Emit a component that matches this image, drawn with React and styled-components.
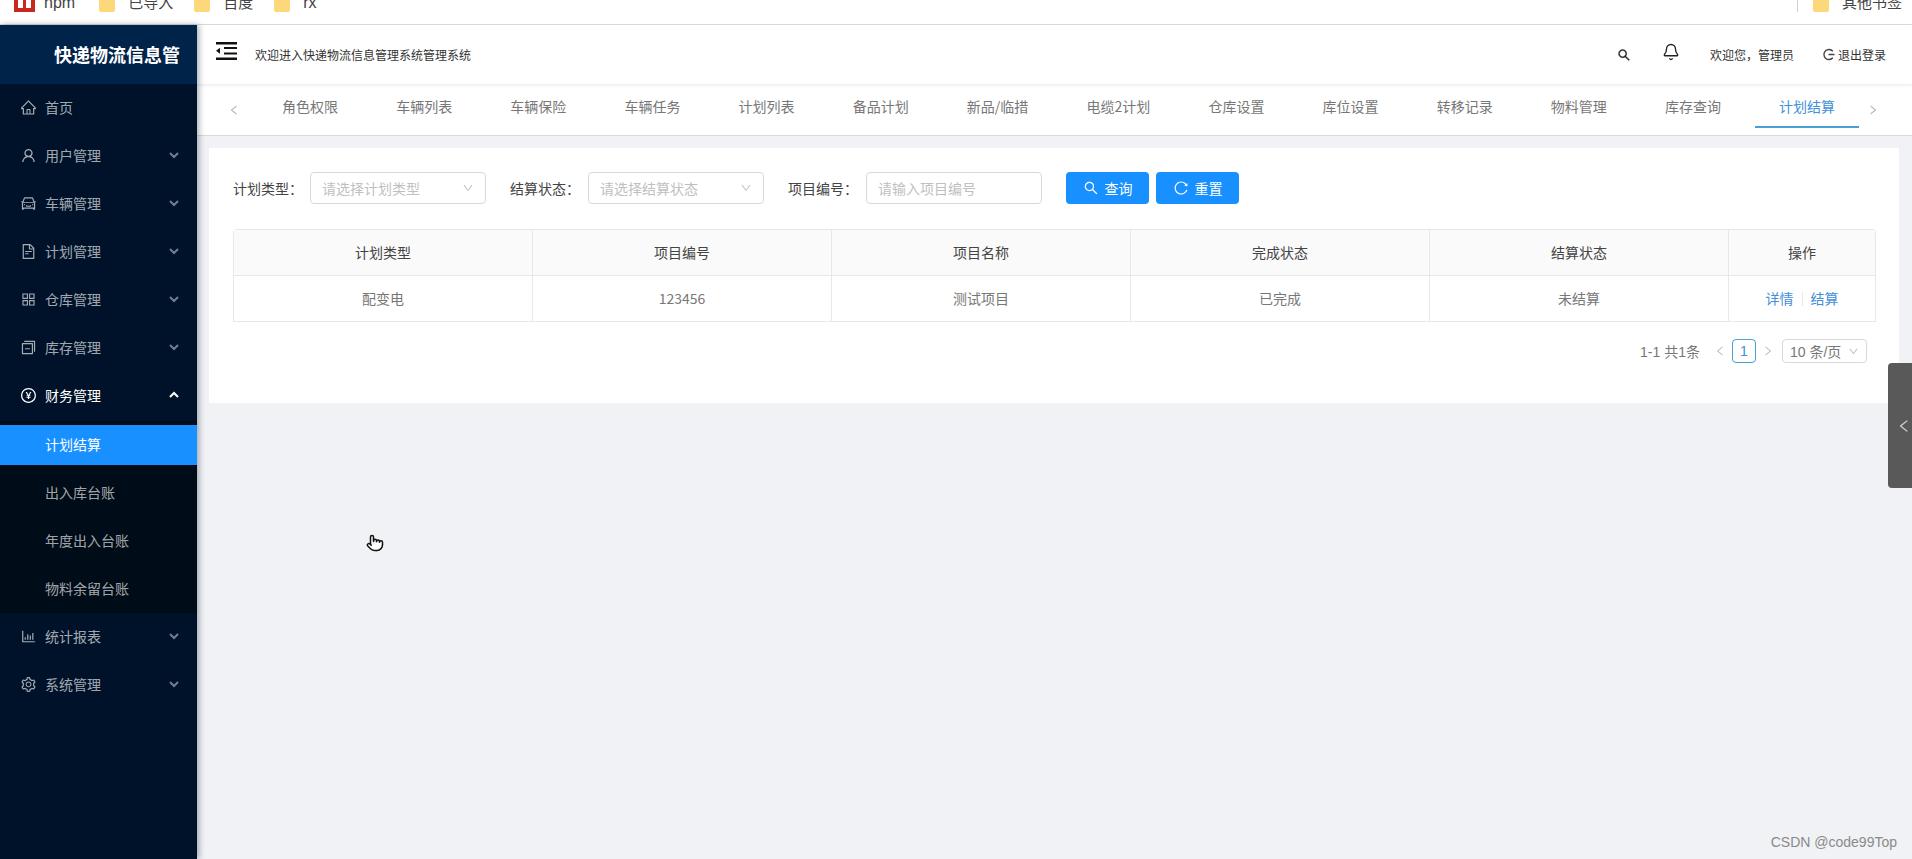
import React from 'react';
import styled, { createGlobalStyle } from 'styled-components';
import {
  AiOutlineHome, AiOutlineUser, AiOutlineCar, AiOutlineFileText, AiOutlineAppstore, AiOutlineSwitcher,
  AiOutlinePayCircle, AiOutlineBarChart, AiOutlineSetting, AiOutlineSearch, AiOutlineReload,
  AiOutlineDown, AiOutlineLeft, AiOutlineRight,
} from 'react-icons/ai';
import { Bell, Pointer } from 'lucide-react';

const GlobalStyle = createGlobalStyle`
  html, body { margin: 0; padding: 0; overflow: hidden; }
  body { font-family: "Noto Sans CJK SC", "Liberation Sans", sans-serif; font-size: 14px; }
  * { box-sizing: border-box; }
`;

const Page = styled.div`
  position: relative;
  width: 1912px;
  height: 859px;
  overflow: hidden;
  background: #f0f2f5;
  display: flex;
  flex-direction: column;
`;

/* browser bookmark bar, cut off by the top of the capture */
const Bookmarks = styled.div`
  height: 25px;
  flex: none;
  background: #fff;
  border-bottom: 1px solid #dcdcdc;
  display: flex;
  overflow: hidden;
  padding: 0 10px 0 14px;
`;
const Mark = styled.div`
  display: flex;
  flex: none;
  align-items: flex-start;
  margin-right: ${p => p.$gap}px;
  height: 24px;
  &.right { margin-left: auto; }
`;
const MarkText = styled.span`
  font-size: ${p => (p.$cjk ? 15 : 16)}px;
  line-height: 20px;
  margin-top: -7px;
  color: #444;
  white-space: nowrap;
  font-family: "Liberation Sans", "Noto Sans CJK SC", sans-serif;
`;
const Folder = styled.i`
  display: block;
  flex: none;
  width: 16px;
  height: 12px;
  background: #fdd87b;
  border-radius: 0 0 2px 2px;
  margin-right: 13px;
`;
const MarkDivider = styled.i`
  display: block;
  flex: none;
  width: 1px;
  height: 12px;
  background: #d0d0d0;
  margin-right: 15px;
`;

const Body = styled.div`
  flex: 1;
  display: flex;
  min-height: 0;
`;

const Sidebar = styled.aside`
  width: 197px;
  flex: none;
  background: #001229;
  box-shadow: 2px 0 6px rgba(0, 21, 41, 0.35);
  position: relative;
  z-index: 3;
`;
const Logo = styled.div`
  height: 59px;
  background: #00234a;
  color: #fff;
  font-size: 18px;
  font-weight: 700;
  line-height: 59px;
  padding-left: 54px;
  white-space: nowrap;
`;
const Nav = styled.nav`
  display: flex;
  flex-direction: column;
`;
const MenuItem = styled.div`
  height: 40px;
  margin: 4px 0;
  padding: 0 0 2px 20px;
  display: flex;
  align-items: center;
  color: ${p => (p.$open ? '#fff' : 'rgba(255, 255, 255, 0.65)')};
  line-height: 38px;
  position: relative;
  svg.menu-icon { font-size: 17px; margin-right: 8px; flex: none; }
`;
const Arrow = styled.svg`
  position: absolute;
  left: 169px;
  top: 15px;
  width: 10px;
  height: 8px;
  fill: none;
  stroke: currentColor;
  stroke-width: 2;
  opacity: ${p => (p.$up ? 1 : 0.7)};
`;
const SubMenu = styled.div`
  margin-top: 1px;
  background: #000c17;
  display: flex;
  flex-direction: column;
`;
const SubItem = styled.div`
  height: 40px;
  margin: 4px 0;
  padding-left: 45px;
  line-height: 38px;
  color: ${p => (p.$active ? '#fff' : 'rgba(255, 255, 255, 0.65)')};
  background: ${p => (p.$active ? '#1890ff' : 'transparent')};
`;

const Main = styled.div`
  flex: 1;
  min-width: 0;
  display: flex;
  flex-direction: column;
`;
const Header = styled.header`
  height: 59px;
  flex: none;
  background: #fff;
  box-shadow: 0 1px 3px rgba(0, 21, 41, 0.1);
  display: flex;
  align-items: center;
  padding: 0 26px 0 19px;
  font-size: 12px;
  color: #333;
  position: relative;
  z-index: 1;
`;
const FoldIcon = styled.svg`
  width: 21px;
  height: 18px;
  fill: #111;
  margin: -7px 18px 0 0;
`;
const Spacer = styled.div`
  flex: 1;
`;
const HeadSearch = styled(AiOutlineSearch)`
  font-size: 14px;
  color: #222;
  stroke: currentColor;
  stroke-width: 30;
  margin-right: 31px;
`;
const HeadBell = styled(Bell)`
  width: 18px;
  height: 18px;
  stroke-width: 1.8;
  color: #222;
  margin: -6px 30px 0 0;
`;
const LogoutIcon = styled.svg`
  width: 13px;
  height: 13px;
  fill: none;
  stroke: #444;
  stroke-width: 1.4;
`;
const Logout = styled.span`
  display: flex;
  align-items: center;
  gap: 3px;
  margin-left: 28px;
`;

const TabBar = styled.div`
  height: 52px;
  flex: none;
  background: #fff;
  border-bottom: 1px solid #d9d9d9;
  display: flex;
  position: relative;
  padding-left: 61px;
`;
const TabEnd = styled.span`
  position: absolute;
  top: 20px;
  left: ${p => p.$left}px;
  color: #aaa;
  font-size: 12px;
  line-height: 12px;
`;
const Tab = styled.div`
  height: 44px;
  padding: 0 24px;
  margin-right: 10.15px;
  line-height: 45px;
  white-space: nowrap;
  color: ${p => (p.$active ? '#3f90d8' : '#777')};
  border-bottom: 2px solid ${p => (p.$active ? '#4a9fd4' : 'transparent')};
`;

const Content = styled.main`
  padding: 12px 13px 0 12px;
`;
const Card = styled.section`
  background: #fff;
  padding: 24px 24px 40px;
`;
const Filters = styled.form`
  display: flex;
  align-items: center;
  height: 32px;
  margin-bottom: 25px;
`;
const Label = styled.label`
  color: #444;
  white-space: nowrap;
  width: ${p => p.$w}px;
`;
const Select = styled.div`
  width: 176px;
  height: 32px;
  margin-right: 24px;
  border: 1px solid #d9d9d9;
  border-radius: 4px;
  padding: 0 11px;
  display: flex;
  align-items: center;
  justify-content: space-between;
  color: #bfbfbf;
  svg { font-size: 12px; }
`;
const SearchBtn = styled.button`
  width: 83px;
  height: 32px;
  margin-right: 7px;
  border: 0;
  border-radius: 4px;
  background: #1890ff;
  color: #fff;
  font: inherit;
  display: flex;
  align-items: center;
  justify-content: center;
  gap: 6px;
  svg { font-size: 16px; }
`;

const Table = styled.table`
  width: 1642px;
  table-layout: fixed;
  border-collapse: separate;
  border-spacing: 0;
  border: 1px solid #e8e8e8;
  border-bottom: 0;
  border-radius: 4px 4px 0 0;
  th, td {
    height: 46px;
    padding: 0 0 2px;
    text-align: center;
    font-weight: 400;
    border-bottom: 1px solid #e8e8e8;
    border-right: 1px solid #e8e8e8;
  }
  th:last-child, td:last-child { border-right: 0; }
  th { background: #fafafa; color: #444; }
  td { color: #777; }
`;
const RowLink = styled.a`
  color: #3f90d8;
`;
const LinkGap = styled.i`
  display: inline-block;
  width: 1px;
  height: 14px;
  background: #e8e8e8;
  margin: 0 8px;
  vertical-align: -2px;
`;

const Pager = styled.div`
  display: flex;
  align-items: center;
  justify-content: flex-end;
  height: 24px;
  margin: 17px 8px 0 0;
  color: #777;
  font-family: "Liberation Sans", "Noto Sans CJK SC", sans-serif;
`;
const PagerArrow = styled.span`
  color: #bbb;
  font-size: 12px;
  display: flex;
  margin: ${p => p.$m};
`;
const PageNo = styled.span`
  width: 24px;
  height: 24px;
  border: 1px solid #4a9fd4;
  border-radius: 4px;
  color: #3f90d8;
  text-align: center;
  line-height: 22px;
`;
const PageSize = styled.span`
  width: 85px;
  height: 24px;
  border: 1px solid #d9d9d9;
  border-radius: 4px;
  padding: 0 7px;
  display: flex;
  align-items: center;
  justify-content: space-between;
  white-space: nowrap;
  svg { font-size: 11px; color: #bbb; }
`;

/* floating bits */
const Drawer = styled.div`
  position: absolute;
  right: 0;
  top: 363px;
  width: 24px;
  height: 125px;
  background: #595959;
  border-radius: 4px 0 0 4px;
  color: #ccc;
  display: flex;
  align-items: center;
  padding-left: 8px;
  font-size: 18px;
  z-index: 5;
`;
const Hand = styled(Pointer)`
  position: absolute;
  left: 366px;
  top: 533px;
  width: 18px;
  height: 20px;
  fill: #fff;
  stroke: #111;
  z-index: 6;
`;
const Watermark = styled.div`
  position: absolute;
  right: 15px;
  bottom: 8px;
  font-size: 14px;
  line-height: 18px;
  color: #8a8a8a;
  font-family: "Liberation Sans", sans-serif;
  z-index: 6;
`;

const menus = [
  { title: '首页', icon: AiOutlineHome, noArrow: true },
  { title: '用户管理', icon: AiOutlineUser },
  { title: '车辆管理', icon: AiOutlineCar },
  { title: '计划管理', icon: AiOutlineFileText },
  { title: '仓库管理', icon: AiOutlineAppstore },
  { title: '库存管理', icon: AiOutlineSwitcher },
  { title: '财务管理', icon: AiOutlinePayCircle, open: true, children: ['计划结算', '出入库台账', '年度出入台账', '物料余留台账'] },
  { title: '统计报表', icon: AiOutlineBarChart },
  { title: '系统管理', icon: AiOutlineSetting },
];
const tabs = ['角色权限', '车辆列表', '车辆保险', '车辆任务', '计划列表', '备品计划', '新品/临措', '电缆2计划', '仓库设置', '库位设置', '转移记录', '物料管理', '库存查询', '计划结算'];
const columns = ['计划类型', '项目编号', '项目名称', '完成状态', '结算状态', '操作'];
const row = ['配变电', '123456', '测试项目', '已完成', '未结算'];

function App() {
  return (
    <Page>
      <GlobalStyle />
      <Bookmarks>
        <Mark $gap={9}>
          <svg width="21" height="12" viewBox="0 0 21 12">
            <path d="M0 0h21v12H0z" fill="#c9281e" />
            <path d="M4 0h5v8H4zM12 0h5v8h-5z" fill="#fff" />
          </svg>
        </Mark>
        <Mark $gap={24}><MarkText>npm</MarkText></Mark>
        <Mark $gap={21}><Folder /><MarkText $cjk>已导入</MarkText></Mark>
        <Mark $gap={21}><Folder /><MarkText $cjk>百度</MarkText></Mark>
        <Mark $gap={0}><Folder /><MarkText>rx</MarkText></Mark>
        <Mark $gap={0} className="right"><MarkDivider /><Folder /><MarkText $cjk>其他书签</MarkText></Mark>
      </Bookmarks>
      <Body>
        <Sidebar>
          <Logo>快递物流信息管</Logo>
          <Nav>
            {menus.map(menu => (
              <React.Fragment key={menu.title}>
                <MenuItem $open={menu.open}>
                  <menu.icon className="menu-icon" />
                  {menu.title}
                  {!menu.noArrow && (
                    <Arrow viewBox="0 0 10 8" $up={menu.open}>
                      <polyline points={menu.open ? '1,6 5,2 9,6' : '1,2 5,6 9,2'} />
                    </Arrow>
                  )}
                </MenuItem>
                {menu.children && (
                  <SubMenu>
                    {menu.children.map((child, i) => (
                      <SubItem key={child} $active={i === 0}>{child}</SubItem>
                    ))}
                  </SubMenu>
                )}
              </React.Fragment>
            ))}
          </Nav>
        </Sidebar>
        <Main>
          <Header>
            <FoldIcon viewBox="0 0 21 18">
              <path d="M0 0h21v2.5H0zM8 5h13v2H8zM8 10.500h13v2H8zM0 15.500h21V18H0zM0 8.700l4-3v6z" />
            </FoldIcon>
            <span>欢迎进入快递物流信息管理系统管理系统</span>
            <Spacer />
            <HeadSearch />
            <HeadBell />
            <span>欢迎您，管理员</span>
            <Logout>
              <LogoutIcon viewBox="0 0 13 13">
                <path d="M10.800 3.300A5 5 0 1 0 10.800 9.700M6.500 6.500H12.500" />
              </LogoutIcon>
              退出登录
            </Logout>
          </Header>
          <TabBar>
            <TabEnd $left={31}><AiOutlineLeft /></TabEnd>
            {tabs.map((tab, i) => (
              <Tab key={tab} $active={i === tabs.length - 1}>{tab}</Tab>
            ))}
            <TabEnd $left={1670}><AiOutlineRight /></TabEnd>
          </TabBar>
          <Content>
            <Card>
              <Filters>
                <Label $w={77}>计划类型：</Label>
                <Select>请选择计划类型<AiOutlineDown /></Select>
                <Label $w={78}>结算状态：</Label>
                <Select>请选择结算状态<AiOutlineDown /></Select>
                <Label $w={78}>项目编号：</Label>
                <Select>请输入项目编号</Select>
                <SearchBtn type="button"><AiOutlineSearch />查询</SearchBtn>
                <SearchBtn type="button"><AiOutlineReload />重置</SearchBtn>
              </Filters>
              <Table>
                <colgroup>
                  {columns.map((c, i) => <col key={c} width={i === 5 ? 146 : 299} />)}
                </colgroup>
                <thead>
                  <tr>{columns.map(c => <th key={c}>{c}</th>)}</tr>
                </thead>
                <tbody>
                  <tr>
                    {row.map(v => <td key={v}>{v}</td>)}
                    <td><RowLink>详情</RowLink><LinkGap /><RowLink>结算</RowLink></td>
                  </tr>
                </tbody>
              </Table>
              <Pager>
                <span>1-1 共1条</span>
                <PagerArrow $m="0 6px 0 14px"><AiOutlineLeft /></PagerArrow>
                <PageNo>1</PageNo>
                <PagerArrow $m="0 8px 0 6px"><AiOutlineRight /></PagerArrow>
                <PageSize>10 条/页<AiOutlineDown /></PageSize>
              </Pager>
            </Card>
          </Content>
        </Main>
      </Body>
      <Drawer><AiOutlineLeft /></Drawer>
      <Hand />
      <Watermark>CSDN @code99Top</Watermark>
    </Page>
  );
}

export default App;
